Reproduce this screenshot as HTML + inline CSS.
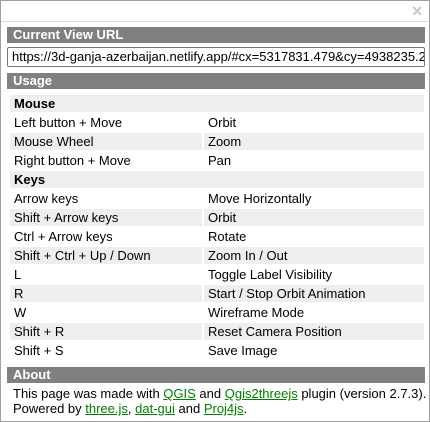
<!DOCTYPE html>
<html><head><style>
body{margin:0;width:430px;height:422px;overflow:hidden;background:#fff;font-family:"Liberation Sans",Arial,sans-serif;font-size:13px;color:#000}
.box{position:absolute;left:0;top:0;width:428px;height:420px;border:1px solid #a0a0a0}
.x{position:absolute;right:6px;top:2px;color:#c8c8c8;font-size:14px;font-weight:bold}
.line{position:absolute;left:0;right:0;top:20px;border-top:1px solid #ddd}
.bar{position:absolute;left:6px;width:418px;height:16px;background:#808080;color:#fff;font-weight:bold;font-size:13px;line-height:16px;padding-left:6px;box-sizing:border-box}
.inp{position:absolute;left:6px;top:46px;width:418px;height:20px;border:1px solid #767676;border-radius:2px;box-sizing:border-box;padding-left:4px;line-height:18px;white-space:nowrap;overflow:hidden;font-size:13px}
table{position:absolute;left:7px;top:92px;border-spacing:2px;width:418px;border-collapse:separate}
td{height:17px;padding:0 0 0 4px;line-height:17px;white-space:nowrap;font-size:13px}
tr:nth-child(odd) td{background:#eee}
td:first-child{width:188px}
.b td{font-weight:bold}
.ab{position:absolute;left:12px;top:385px;line-height:15px;font-size:13px}
a{color:#008000;text-decoration:underline}
</style></head><body>
<div class="box">
<div class="x">✕</div><div class="line"></div>
<div class="bar" style="top:26px">Current View URL</div>
<div class="inp">https://3d-ganja-azerbaijan.netlify.app/#cx=5317831.479&amp;cy=4938235.2</div>
<div class="bar" style="top:72px">Usage</div>
<table>
<tr class="b"><td colspan="2">Mouse</td></tr>
<tr><td>Left button + Move</td><td>Orbit</td></tr>
<tr><td>Mouse Wheel</td><td>Zoom</td></tr>
<tr><td>Right button + Move</td><td>Pan</td></tr>
<tr class="b"><td colspan="2">Keys</td></tr>
<tr><td>Arrow keys</td><td>Move Horizontally</td></tr>
<tr><td>Shift + Arrow keys</td><td>Orbit</td></tr>
<tr><td>Ctrl + Arrow keys</td><td>Rotate</td></tr>
<tr><td>Shift + Ctrl + Up / Down</td><td>Zoom In / Out</td></tr>
<tr><td>L</td><td>Toggle Label Visibility</td></tr>
<tr><td>R</td><td>Start / Stop Orbit Animation</td></tr>
<tr><td>W</td><td>Wireframe Mode</td></tr>
<tr><td>Shift + R</td><td>Reset Camera Position</td></tr>
<tr><td>Shift + S</td><td>Save Image</td></tr>
</table>
<div class="bar" style="top:366px">About</div>
<div class="ab">This page was made with <a>QGIS</a> and <a>Qgis2threejs</a> plugin (version 2.7.3).<br>Powered by <a>three.js</a>, <a>dat-gui</a> and <a>Proj4js</a>.</div>
</div>
</body></html>
